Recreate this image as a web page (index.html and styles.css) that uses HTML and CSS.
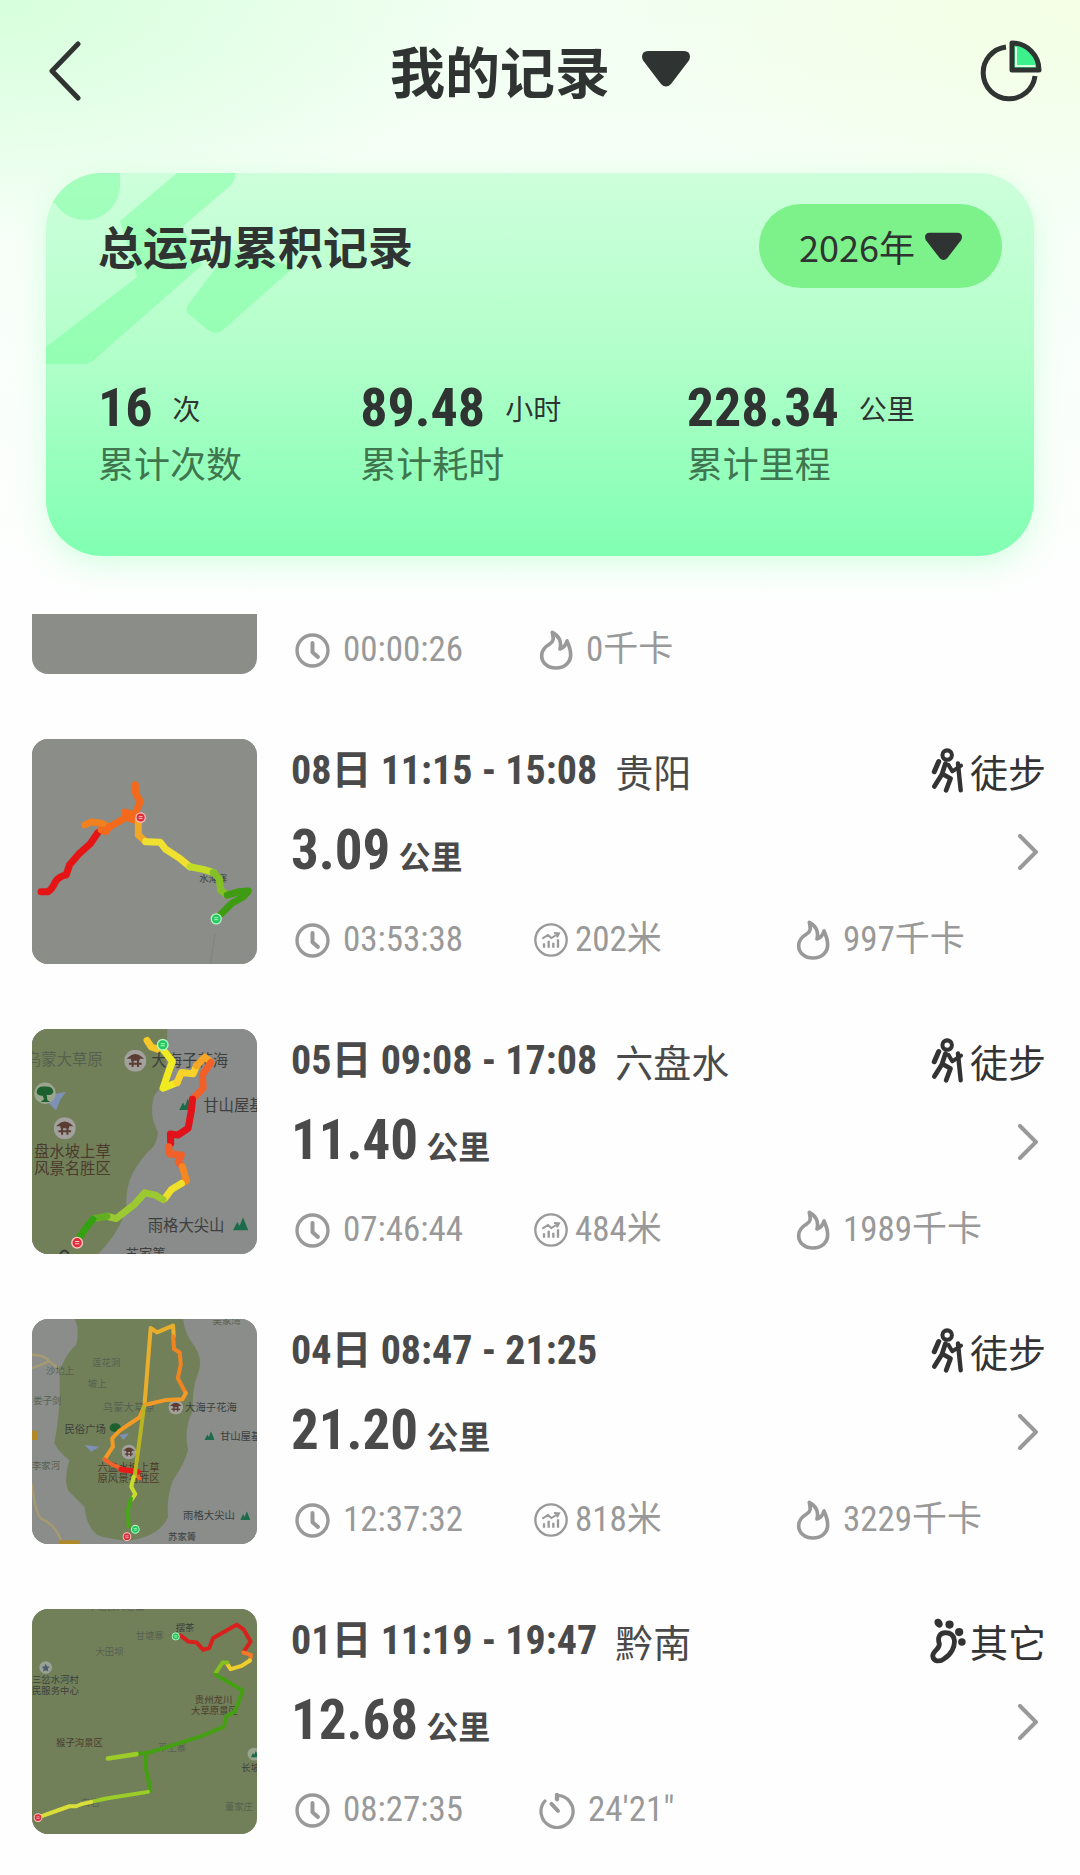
FILE: index.html
```html
<!DOCTYPE html>
<html lang="zh-CN">
<head>
<meta charset="utf-8">
<meta name="viewport" content="width=device-width, initial-scale=1">
<title>我的记录</title>
<link rel="stylesheet" href="styles.css">
</head>
<body>
<svg class="defs" aria-hidden="true">
  <symbol id="i-drop" viewBox="0 0 48 36"><path d="M6 0H42Q48 0 48 6Q48 9 45 12L29 33Q24 38 19 33L3 12Q0 9 0 6Q0 0 6 0Z" fill="currentColor"/></symbol>
  <symbol id="i-clock" viewBox="46 576 104 104"><g fill="none" stroke="currentColor" stroke-width="10" stroke-linecap="round" stroke-linejoin="round"><circle cx="98" cy="628" r="46"/><path d="M98 606V633L114 647" stroke-width="12"/></g></symbol>
  <symbol id="i-flame" viewBox="800 14 98 120"><path d="M838 21C842 40 843 48 830 56C813 66 806 78 806 91C806 113 825 128 849 128C874 128 893 112 893 88C893 71 888 60 882 47C878 60 872 68 861 71C867 49 857 30 838 21Z" fill="none" stroke="currentColor" stroke-width="11" stroke-linejoin="round"/></symbol>
  <symbol id="i-climb" viewBox="12 27 102 102"><g fill="none" stroke="currentColor" stroke-width="7"><circle cx="63" cy="78" r="47"/><path d="M42 88V101M56 80V101M70 86V101M84 76V101"/><path d="M37 74L54 63L64 72L84 60M72 57L87 58L81 70" stroke-width="6"/></g></symbol>
  <symbol id="i-pace" viewBox="772 570 110 112"><g fill="none" stroke="currentColor" stroke-width="10" stroke-linecap="round"><path d="M827 580A49 49 0 1 1 790 597"/><path d="M810 606L830 627" stroke-width="12"/><path d="M827 578V592" stroke-width="13"/></g></symbol>
  <symbol id="i-hike" viewBox="15 8 105 136"><g fill="none" stroke="currentColor" stroke-width="14" stroke-linecap="round" stroke-linejoin="round"><circle cx="65" cy="29" r="14" stroke-width="12"/><path d="M40 48L27 78" stroke-width="15"/><path d="M60 54L50 84L75 98L62 133"/><path d="M69 58L80 77L106 60" stroke-width="12"/><path d="M47 90L27 122"/><path d="M97 54L105 133" stroke-width="13"/></g></symbol>
  <symbol id="i-foot" viewBox="80 60 105 134"><g fill="currentColor"><ellipse cx="105" cy="75" rx="11" ry="14" transform="rotate(-35 105 75)"/><circle cx="137" cy="79" r="12"/><circle cx="165" cy="101" r="12"/><circle cx="173" cy="130" r="11"/></g><path d="M125 103C109 103 101 116 107 134C110 150 87 156 88 171C90 187 108 189 121 179C143 165 153 143 151 125C149 110 140 103 125 103Z" fill="none" stroke="currentColor" stroke-width="14"/></symbol>
  <symbol id="i-next" viewBox="0 0 20 36"><path d="M2 2L18 18L2 34" fill="none" stroke="currentColor" stroke-width="4" stroke-linecap="round"/></symbol>
  <symbol id="i-peak" viewBox="0 0 46 40"><path d="M0 40L13 14L20 26L30 0L46 40Z" fill="#1c6b4a"/></symbol>
  <symbol id="i-gate" viewBox="0 0 66 66"><circle cx="33" cy="33" r="33" fill="#a3a19d"/><path d="M15 24Q33 8 51 24ZM20 30H46M14 42H52M25 22V52M41 22V52" fill="#5a3d33" stroke="#5a3d33" stroke-width="6"/></symbol>
  <symbol id="i-start" viewBox="0 0 36 36"><circle cx="18" cy="18" r="15" fill="#1fc95c" stroke="#b5f5c5" stroke-width="4"/><path d="M12 15H24M12 21H24" stroke="#b5f5c5" stroke-width="3"/></symbol>
  <symbol id="i-end" viewBox="0 0 36 36"><circle cx="18" cy="18" r="15" fill="#dc2f3c" stroke="#ffc4c4" stroke-width="4"/><path d="M12 15H24M12 21H24" stroke="#ffc4c4" stroke-width="3"/></symbol>
</svg>

<header class="topbar">
  <button class="icon-btn" type="button" aria-label="返回">
    <svg width="34" height="60" viewBox="0 0 34 60"><path d="M30 3L4 30L30 57" fill="none" stroke="currentColor" stroke-width="5" stroke-linecap="round" stroke-linejoin="round"/></svg>
  </button>
  <h1 class="title"><button class="title-btn" type="button" aria-haspopup="menu">我的记录<svg width="48" height="36"><use href="#i-drop"/></svg></button></h1>
  <button class="icon-btn" type="button" aria-label="统计">
    <svg width="62" height="62" viewBox="0 0 62 62"><path d="M26 7A26 26 0 1 0 55 36" fill="none" stroke="currentColor" stroke-width="5"/><path d="M32 3V30H59A27 27 0 0 0 32 3Z" fill="#3cf08c" stroke="currentColor" stroke-width="5" stroke-linejoin="round"/><path d="M36 7V26H55" fill="none" stroke="#d8ffe4" stroke-width="2"/></svg>
  </button>
</header>

<section class="summary">
  <svg class="summary-art" width="300" height="192" viewBox="0 0 300 192" aria-hidden="true"><g fill="#6cff94" fill-opacity=".42"><path d="M9 30A35 35 0 0 0 74 12V0H0V30Z"/><path d="M132 0H190Q190 8 184 13L46 185Q40 191 34 191H0V174L91 105L76 44Z" opacity="0"/><path d="M131 0H189Q190 7 184 13L136 54L156 92L50 185Q44 191 38 191H0V174L91 104L74 48Z"/><path d="M184 76L142 132Q138 138 144 142L162 157Q170 163 178 156L248 94Z"/></g></svg>
  <div class="summary-head">
    <h2 class="summary-title">总运动累积记录</h2>
    <div class="year">
      <select class="year-select" aria-label="年份"><option>2026年</option></select>
      <svg width="37" height="29" aria-hidden="true"><use href="#i-drop"/></svg>
    </div>
  </div>
  <dl class="totals">
    <div class="total"><dd class="total-value"><b>16</b><span>次</span></dd><dt>累计次数</dt></div>
    <div class="total"><dd class="total-value"><b>89.48</b><span>小时</span></dd><dt>累计耗时</dt></div>
    <div class="total"><dd class="total-value"><b>228.34</b><span>公里</span></dd><dt>累计里程</dt></div>
  </dl>
</section>

<ul class="records">
  <li class="record record--cut">
    <div class="thumb"></div>
    <div class="info">
      <div class="stats">
        <span class="stat"><svg width="35" height="35"><use href="#i-clock"/></svg>00:00:26</span>
        <span class="stat stat--inset"><svg width="34" height="40"><use href="#i-flame"/></svg>0千卡</span>
      </div>
    </div>
  </li>

  <li class="record">
    <svg class="thumb" viewBox="38 28 673 673" aria-hidden="true">
      <rect x="38" y="28" width="673" height="673" fill="#8a8d88"/>
      <text class="map-label map-label--s" x="538" y="455">水淹寨</text>
      <path d="M585 610L572 701" stroke="#7f827e" stroke-width="3"/>
      <g class="track track--l">
        <path stroke="#f08020" d="M196 285L215 276L245 280L265 290"/>
        <path stroke="#e51515" d="M65 485H85Q98 478 108 455Q120 438 140 435L150 405L180 370L212 342L235 308"/>
        <path stroke="#f46a1c" d="M245 300L260 305L268 292L320 262L316 247L345 255L362 215L348 190L347 165M320 262L358 275"/>
        <path stroke="#f0a828" d="M356 270V315L378 335"/>
        <path stroke="#f0e030" d="M378 335L422 337L438 358L480 385L510 410"/>
        <path stroke="#c2dc28" d="M510 410L550 418L580 427"/>
        <path stroke="#84bf28" d="M580 427L598 445L602 480L622 495"/>
        <path stroke="#3f9c12" d="M622 495L655 485L685 483L670 500L635 520L605 550"/>
      </g>
      <use href="#i-end" x="346" y="246" width="34" height="34"/>
      <use href="#i-start" x="571" y="548" width="36" height="36"/>
    </svg>
    <div class="info">
      <div class="row row--head"><time class="when">08日 11:15 - 15:08</time><span class="place">贵阳</span><span class="sport"><svg width="36" height="46"><use href="#i-hike"/></svg>徒步</span></div>
      <div class="row row--dist"><p class="dist"><b>3.09</b><span>公里</span></p><a class="next" href="#r08" aria-label="查看详情"><svg width="20" height="36"><use href="#i-next"/></svg></a></div>
      <div class="stats">
        <span class="stat"><svg width="35" height="35"><use href="#i-clock"/></svg>03:53:38</span>
        <span class="stat stat--climb"><svg width="34" height="34"><use href="#i-climb"/></svg>202米</span>
        <span class="stat"><svg width="34" height="40"><use href="#i-flame"/></svg>997千卡</span>
      </div>
    </div>
  </li>

  <li class="record">
    <svg class="thumb" viewBox="38 28 673 673" aria-hidden="true">
      <rect x="38" y="28" width="673" height="673" fill="#8a8b8b"/>
      <path d="M38 28H443L440 130Q435 195 405 225Q392 260 400 300L415 340Q410 380 385 395Q345 440 330 480Q318 520 320 570Q290 650 235 701H38Z" fill="#72805a"/>
      <path d="M88 250L110 222L140 216L122 240L110 272Z" fill="#7d90b5"/>
      <circle cx="77" cy="220" r="32" fill="#9aa58d"/><path d="M52 215Q55 198 75 200Q100 198 102 216Q98 228 82 225L84 240L92 246H64L74 238L70 228Q52 228 52 215Z" fill="#1c6030"/>
      <use href="#i-gate" x="314" y="90" width="66" height="66"/>
      <use href="#i-gate" x="103" y="292" width="66" height="66"/>
      <use href="#i-peak" x="478" y="236" width="40" height="34"/>
      <use href="#i-peak" x="639" y="591" width="46" height="40"/>
      <g class="map-label">
        <text class="map-label--faint" x="20" y="137">乌蒙大草原</text>
        <text x="395" y="139">大海子花海</text>
        <text x="550" y="272">甘山屋基</text>
        <text class="map-label--brown" x="44" y="411">盘水坡上草</text>
        <text class="map-label--brown" x="44" y="463">风景名胜区</text>
        <text x="384" y="632">雨格大尖山</text>
        <text x="318" y="717" class="map-label--p">苏家箐</text>
      </g>
      <g class="track track--l">
        <path stroke="#f6c82a" d="M382 62L395 82L412 88"/>
        <path stroke="#f0ea20" d="M432 92L458 125L445 160L430 205L472 188"/>
        <path stroke="#f6d22a" d="M472 188L485 158L520 162L530 138"/>
        <path stroke="#f7a526" d="M530 138L555 112L573 128"/>
        <path stroke="#f2602a" d="M573 128L548 165L550 205L518 238"/>
        <path stroke="#e2121a" d="M518 238L515 270L505 325L475 345L452 342L453 370"/>
        <path stroke="#f2602a" d="M447 380L450 402L485 405L475 425L488 440"/>
        <path stroke="#f78722" d="M488 440L500 482L485 490"/>
        <path stroke="#efe02a" d="M485 490L455 508L435 535"/>
        <path stroke="#9cc832" d="M430 538L405 524L375 518L345 552L290 595L262 588"/>
        <path stroke="#62b022" d="M262 588L225 595"/>
        <path stroke="#35a012" d="M220 598L200 622L182 648"/>
      </g>
      <use href="#i-start" x="410" y="56" width="38" height="38"/>
      <use href="#i-end" x="154" y="648" width="38" height="38"/>
      <path d="M122 701Q135 680 148 701" fill="none" stroke="#3c3f3d" stroke-width="6"/>
    </svg>
    <div class="info">
      <div class="row row--head"><time class="when">05日 09:08 - 17:08</time><span class="place">六盘水</span><span class="sport"><svg width="36" height="46"><use href="#i-hike"/></svg>徒步</span></div>
      <div class="row row--dist"><p class="dist"><b>11.40</b><span>公里</span></p><a class="next" href="#r05" aria-label="查看详情"><svg width="20" height="36"><use href="#i-next"/></svg></a></div>
      <div class="stats">
        <span class="stat"><svg width="35" height="35"><use href="#i-clock"/></svg>07:46:44</span>
        <span class="stat stat--climb"><svg width="34" height="34"><use href="#i-climb"/></svg>484米</span>
        <span class="stat"><svg width="34" height="40"><use href="#i-flame"/></svg>1989千卡</span>
      </div>
    </div>
  </li>

  <li class="record">
    <svg class="thumb" viewBox="38 28 673 673" aria-hidden="true">
      <rect x="38" y="28" width="673" height="673" fill="#8a8d8a"/>
      <path d="M165 28H490Q495 75 525 110Q550 150 535 190Q515 240 520 300Q490 360 505 420Q495 460 460 510Q440 560 445 620Q420 680 320 692L250 680Q205 670 195 590L150 545Q130 520 150 450Q120 430 105 400Q125 290 120 190Q135 135 170 105Q182 60 165 28Z" fill="#72805a"/>
      <path d="M38 135Q75 135 90 155L130 185M38 175L90 155M38 520Q45 600 65 625Q105 640 125 690" fill="none" stroke="#a59a70" stroke-width="7"/>
      <path d="M195 405L240 410L215 425ZM300 375L328 370L312 390Z" fill="#7d90b5"/>
      <rect x="38" y="362" width="18" height="28" fill="#b08a28"/><rect x="118" y="690" width="60" height="12" fill="#b08a28"/>
      <ellipse cx="287" cy="353" rx="17" ry="13" fill="#1c6030"/>
      <use href="#i-gate" x="446" y="270" width="44" height="44"/>
      <use href="#i-gate" x="306" y="404" width="44" height="44"/>
      <use href="#i-peak" x="553" y="364" width="32" height="26"/>
      <use href="#i-peak" x="661" y="603" width="30" height="26"/>
      <g class="map-label map-label--s">
        <text class="map-label--faint" x="578" y="42">吴家湾</text>
        <text class="map-label--faint" x="218" y="170">莲花洞</text>
        <text class="map-label--faint" x="205" y="230">坡上</text>
        <text class="map-label--faint" x="80" y="193">沙地上</text>
        <text class="map-label--faint" x="42" y="282">娄子剑</text>
        <text class="map-label--faint map-label--m" x="250" y="302">乌蒙大草原</text>
        <text x="135" y="369" class="map-label--m">民俗广场</text>
        <text x="496" y="304" class="map-label--m">大海子花海</text>
        <text x="600" y="389" class="map-label--m">甘山屋基</text>
        <text x="234" y="483" class="map-label--brown map-label--m">六盘水坡上草</text>
        <text x="234" y="515" class="map-label--brown map-label--m">原风景名胜区</text>
        <text class="map-label--faint" x="38" y="478">李家河</text>
        <text x="490" y="627" class="map-label--m">雨格大尖山</text>
        <text x="445" y="690">苏家箐</text>
      </g>
      <g class="track">
        <path stroke="#e8ae2c" d="M375 280L393 55L412 68L460 48L462 80"/>
        <path stroke="#f08420" d="M460 80L463 118L480 128L483 165L474 205L498 250"/>
        <path stroke="#f39a26" d="M498 250L488 268L440 270L375 285L360 322L300 362L278 385L280 410L255 448"/>
        <path stroke="#f0622a" d="M255 448L275 462L305 475M360 505L345 488"/>
        <path stroke="#e81a1a" stroke-width="17" d="M305 478L355 485"/>
        <path stroke="#b8b422" d="M373 290L345 500"/>
        <path stroke="#c8dc2c" d="M342 500L335 530L347 552L336 568"/>
        <path stroke="#46a816" d="M334 565L325 600L327 648"/>
      </g>
      <use href="#i-start" x="333" y="643" width="28" height="28"/>
      <use href="#i-end" x="308" y="665" width="28" height="28"/>
    </svg>
    <div class="info">
      <div class="row row--head"><time class="when">04日 08:47 - 21:25</time><span class="sport"><svg width="36" height="46"><use href="#i-hike"/></svg>徒步</span></div>
      <div class="row row--dist"><p class="dist"><b>21.20</b><span>公里</span></p><a class="next" href="#r04" aria-label="查看详情"><svg width="20" height="36"><use href="#i-next"/></svg></a></div>
      <div class="stats">
        <span class="stat"><svg width="35" height="35"><use href="#i-clock"/></svg>12:37:32</span>
        <span class="stat stat--climb"><svg width="34" height="34"><use href="#i-climb"/></svg>818米</span>
        <span class="stat"><svg width="34" height="40"><use href="#i-flame"/></svg>3229千卡</span>
      </div>
    </div>
  </li>

  <li class="record">
    <svg class="thumb" viewBox="38 28 673 673" aria-hidden="true">
      <rect x="38" y="28" width="673" height="673" fill="#72805a"/>
      <circle cx="79" cy="203" r="19" fill="#9aa196"/><path d="M79 192L83 200L91 201L85 207L87 215L79 211L71 215L73 207L67 201L75 200Z" fill="#4c5a6a"/>
      <circle cx="702" cy="462" r="19" fill="#9aa58d"/>
      <use href="#i-peak" x="690" y="452" width="28" height="20"/>
      <g class="map-label map-label--s">
        <text class="map-label--faint" x="205" y="30">平塘县大塘镇</text>
        <text x="468" y="94">摆茶</text>
        <text class="map-label--faint" x="348" y="118">甘塘寨</text>
        <text class="map-label--faint" x="228" y="166">大田坝</text>
        <text x="38" y="249">三岔水河村</text>
        <text x="38" y="281">民服务中心</text>
        <text x="525" y="310" class="map-label--brown">贵州龙川</text>
        <text x="514" y="341" class="map-label--brown">大草原景区</text>
        <text x="110" y="437" class="map-label--brown">猴子沟景区</text>
        <text class="map-label--faint" x="415" y="452">平上寨</text>
        <text x="664" y="513">长坡</text>
        <text class="map-label--faint" x="185" y="617">白岩</text>
        <text class="map-label--faint" x="615" y="630">董家庄</text>
      </g>
      <g class="track">
        <path stroke="#d8201c" d="M482 107L505 125L530 128L550 150L568 145L580 115L650 75L670 88L692 125L670 158"/>
        <path stroke="#f07a28" d="M670 158L693 165L690 182"/>
        <path stroke="#f0ce2a" d="M690 182L665 198L632 208L622 192"/>
        <path stroke="#86c020" d="M622 188L608 188L588 218"/>
        <path stroke="#44a012" d="M588 225L668 272L645 335L620 348L612 380L545 408L420 448L385 458L350 462M380 460L378 500L392 570L380 578"/>
        <path stroke="#9ccc28" d="M350 462L265 475" stroke-width="14"/>
        <path stroke="#9ccc28" d="M385 575L260 595L215 605"/>
        <path stroke="#dade38" d="M215 605L185 612L170 618L150 618L65 648"/>
      </g>
      <use href="#i-start" x="455" y="97" width="26" height="26"/>
      <use href="#i-end" x="42" y="638" width="28" height="28"/>
    </svg>
    <div class="info">
      <div class="row row--head"><time class="when">01日 11:19 - 19:47</time><span class="place">黔南</span><span class="sport"><svg width="36" height="46"><use href="#i-foot"/></svg>其它</span></div>
      <div class="row row--dist"><p class="dist"><b>12.68</b><span>公里</span></p><a class="next" href="#r01" aria-label="查看详情"><svg width="20" height="36"><use href="#i-next"/></svg></a></div>
      <div class="stats">
        <span class="stat"><svg width="35" height="35"><use href="#i-clock"/></svg>08:27:35</span>
        <span class="stat stat--inset"><svg width="36" height="37"><use href="#i-pace"/></svg>24'21"</span>
      </div>
    </div>
  </li>
</ul>
</body>
</html>
```
FILE: styles.css
```css
* { box-sizing: border-box; margin: 0; padding: 0; }

body {
  --ink: #2f3331;
  --num: "Roboto Condensed", "Noto Sans CJK SC", sans-serif;
  min-height: 100vh;
  font-family: "Noto Sans CJK SC", sans-serif;
  color: var(--ink);
  background:
    radial-gradient(ellipse 480px 240px at 0 0, #d6ffdc, rgba(214, 255, 220, 0)) no-repeat,
    radial-gradient(ellipse 480px 220px at 100% 0, #f4ffe4, rgba(244, 255, 228, 0)) no-repeat,
    linear-gradient(#f2fff2, #f8fff9 300px, #fefefe 620px) no-repeat,
    #fefefe;
}

button { border: 0; background: none; color: inherit; font: inherit; cursor: pointer; }
svg { display: block; flex: none; }
ul { list-style: none; }
.defs { position: absolute; width: 0; height: 0; }

.topbar {
  display: grid;
  grid-template-columns: 1fr auto 1fr;
  align-items: center;
  height: 142px;
  padding: 0 38px 0 48px;
}
.icon-btn { justify-self: start; }
.icon-btn:last-child { justify-self: end; }
.title { margin-right: 10px; padding-bottom: 4px; font-weight: 700; }
.title-btn { display: flex; align-items: center; gap: 32px; font-size: 55px; line-height: 80px; }

.summary {
  position: relative;
  margin: 31px 46px 0;
  padding: 31px 32px 70px 52px;
  border-radius: 56px;
  overflow: hidden;
  background: linear-gradient(#cdffdb, #b4ffcb 45%, #80ffb2);
  box-shadow: 0 10px 30px rgba(128, 255, 170, .3);
}
.summary-art { position: absolute; left: 0; top: 0; }
.summary-head { position: relative; display: flex; align-items: center; justify-content: space-between; }
.summary-title { font-size: 45px; font-weight: 700; line-height: 64px; }
.year {
  display: flex;
  align-items: center;
  gap: 10px;
  height: 84px;
  padding: 0 40px;
  border-radius: 42px;
  background: #7df28b;
}
.year-select {
  appearance: none;
  border: 0;
  background: none;
  color: inherit;
  font: 36px/52px "Noto Sans CJK SC", sans-serif;
}

.totals { display: grid; grid-template-columns: 262fr 326fr 315fr; margin-top: 90px; }
.total { display: flex; flex-direction: column; }
.total-value { display: flex; align-items: center; gap: 20px; height: 60px; line-height: 60px; }
.total-value b { font-family: var(--num); font-size: 54px; }
.total-value span { font-size: 28px; }
.total dt { font-size: 36px; line-height: 48px; color: #40764f; }

.records { margin-top: 58px; padding: 0 34px 42px 32px; }
.record { display: flex; gap: 34px; margin-bottom: 65px; }
.record:last-child { margin-bottom: 0; }
.thumb { flex: none; width: 225px; height: 225px; border-radius: 16px; overflow: hidden; background: #8a8d88; }
.record--cut .thumb { height: 60px; border-radius: 0 0 16px 16px; }
.info { flex: 1; display: flex; flex-direction: column; min-width: 0; color: #4a4a4a; }

.row { display: flex; align-items: center; height: 64px; line-height: 60px; }
.when { font-family: var(--num); font-size: 40px; font-weight: 700; }
.place { margin-left: 18px; font-size: 38px; }
.sport { display: flex; align-items: center; gap: 4px; margin-left: auto; font-size: 38px; color: #333; }
.row--dist { margin-top: 17px; }
.dist { display: flex; align-items: baseline; gap: 8px; }
.dist b { font-family: var(--num); font-size: 55px; }
.dist span { font-size: 32px; font-weight: 700; }
.next { margin-left: auto; padding-right: 8px; color: #999; }

.stats { display: grid; grid-template-columns: 239fr 262fr 250fr; margin-top: auto; padding-left: 4px; }
.stat { display: flex; align-items: center; gap: 13px; font: 35px/48px var(--num); color: #999; }
.stat--climb { gap: 7px; }
.stat--inset { padding-left: 5px; }

.map-label { font-size: 46px; fill: #3c3f3d; }
.map-label--p { font-size: 40px; }
.map-label--m { font-size: 31px; }
.map-label--s { font-size: 28px; }
.map-label--faint { fill: #56604f; }
.map-label--brown { fill: #4a3b2c; }
.track { fill: none; stroke-width: 12; stroke-linecap: round; stroke-linejoin: round; }
.track--l { stroke-width: 21; }
```
